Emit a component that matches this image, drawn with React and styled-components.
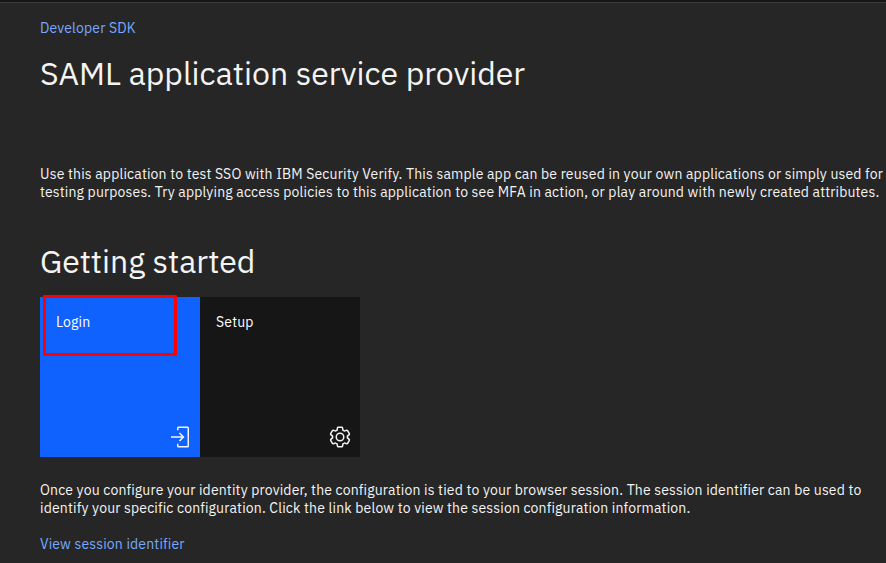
import React from "react";
import styled, { createGlobalStyle } from "styled-components";

const GlobalStyle = createGlobalStyle`
  body {
    margin: 0;
    background: #262626;
    color: #f4f4f4;
    font-family: "IBM Plex Sans", Roboto, "Liberation Sans", sans-serif;
    overflow: hidden;
  }
`;

const Page = styled.div`
  box-sizing: border-box;
  height: 563px;
  background: #262626;
`;

const HeaderEdge = styled.div`
  height: 2px;
  background: #161616;
  border-bottom: 1px solid #393939;
`;

const Content = styled.main`
  display: flex;
  flex-direction: column;
  align-items: flex-start;
  padding: 16px 0 0 40px;
`;

const Link = styled.a`
  color: #78a9ff;
  font-size: 14px;
  line-height: 18px;
  letter-spacing: 0.16px;
  text-decoration: none;
  white-space: nowrap;
`;

const Title = styled.h1`
  margin: ${(p) => p.$top}px 0 0;
  font-size: 32px;
  font-weight: 400;
  line-height: 40px;
  letter-spacing: 0;
  white-space: nowrap;
`;

const Paragraph = styled.p`
  display: flex;
  flex-direction: column;
  margin: ${(p) => p.$top}px 0 ${(p) => p.$bottom || 0}px;
  font-size: 14px;
  line-height: 18px;
`;

const Line = styled.span`
  letter-spacing: 0.16px;
  white-space: nowrap;
`;

const Tiles = styled.div`
  display: flex;
  margin-top: 16px;
`;

const Tile = styled.div`
  position: relative;
  box-sizing: border-box;
  display: flex;
  flex-direction: column;
  justify-content: space-between;
  width: 160px;
  height: 160px;
  padding: 16px 8px 8px 16px;
  background: ${(p) => (p.$primary ? "#0f62fe" : "#161616")};
  color: #ffffff;
  font-size: 14px;
  line-height: 18px;

  svg {
    align-self: flex-end;
    width: 24px;
    height: 24px;
    fill: #f4f4f4;
  }
`;

const Highlight = styled.div`
  position: absolute;
  top: -2px;
  left: 3px;
  box-sizing: border-box;
  width: 134px;
  height: 61px;
  border: 3px solid #ff0000;
  border-radius: 1px;
`;

const LoginIcon = () => (
  <svg viewBox="0 0 32 32" aria-hidden="true">
    <path d="M26,30H14a2,2,0,0,1-2-2V25h2v3H26V4H14V7H12V4a2,2,0,0,1,2-2H26a2,2,0,0,1,2,2V28A2,2,0,0,1,26,30Z" />
    <path d="M14.59 20.59 18.17 17 4 17 4 15 18.17 15 14.59 11.41 16 10 22 16 16 22 14.59 20.59z" />
  </svg>
);

const SettingsIcon = () => (
  <svg viewBox="0 0 32 32" aria-hidden="true">
    <path d="M27,16.76c0-.25,0-.5,0-.76s0-.51,0-.77l1.92-1.68A2,2,0,0,0,29.3,11L26.94,7a2,2,0,0,0-1.73-1,2,2,0,0,0-.64.1l-2.43.82a11.35,11.35,0,0,0-1.31-.75l-.51-2.52a2,2,0,0,0-2-1.61H13.64a2,2,0,0,0-2,1.61l-.51,2.52a11.48,11.48,0,0,0-1.32.75L7.43,6.06A2,2,0,0,0,6.79,6,2,2,0,0,0,5.06,7L2.7,11a2,2,0,0,0,.41,2.51L5,15.24c0,.25,0,.5,0,.76s0,.51,0,.77L3.11,18.45A2,2,0,0,0,2.7,21L5.06,25a2,2,0,0,0,1.73,1,2,2,0,0,0,.64-.1l2.43-.82a11.35,11.35,0,0,0,1.31.75l.51,2.52a2,2,0,0,0,2,1.61h4.72a2,2,0,0,0,2-1.61l.51-2.52a11.48,11.48,0,0,0,1.32-.75l2.42.82a2,2,0,0,0,.64.1,2,2,0,0,0,1.73-1L29.3,21a2,2,0,0,0-.41-2.51ZM25.21,24l-3.43-1.16a8.86,8.86,0,0,1-2.71,1.57L18.36,28H13.64l-.71-3.55a9.36,9.36,0,0,1-2.7-1.57L6.79,24,4.43,20l2.72-2.4a8.9,8.9,0,0,1,0-3.13L4.43,12,6.79,8l3.43,1.16a8.86,8.86,0,0,1,2.71-1.57L13.64,4h4.72l.71,3.55a9.36,9.36,0,0,1,2.7,1.57L25.21,8,27.57,12l-2.72,2.4a8.9,8.9,0,0,1,0,3.13L27.57,20Z" />
    <path d="M16,22a6,6,0,1,1,6-6A5.94,5.94,0,0,1,16,22Zm0-10a3.91,3.91,0,0,0-4,4,3.91,3.91,0,0,0,4,4,3.91,3.91,0,0,0,4-4A3.91,3.91,0,0,0,16,12Z" />
  </svg>
);

export default function App() {
  return (
    <Page>
      <GlobalStyle />
      <HeaderEdge />
      <Content>
        <Link>Developer SDK</Link>
        <Title $top={16}>SAML application service provider</Title>
        <Paragraph $top={72}>
          <Line>
            Use this application to test SSO with IBM Security Verify. This sample app can be reused in your own applications or simply used for
          </Line>
          <Line>
            testing purposes. Try applying access policies to this application to see MFA in action, or play around with newly created attributes.
          </Line>
        </Paragraph>
        <Title $top={40}>Getting started</Title>
        <Tiles>
          <Tile $primary>
            <Line>Login</Line>
            <LoginIcon />
            <Highlight />
          </Tile>
          <Tile>
            <Line>Setup</Line>
            <SettingsIcon />
          </Tile>
        </Tiles>
        <Paragraph $top={24} $bottom={18}>
          <Line>
            Once you configure your identity provider, the configuration is tied to your browser session. The session identifier can be used to
          </Line>
          <Line>
            identify your specific configuration. Click the link below to view the session configuration information.
          </Line>
        </Paragraph>
        <Link>View session identifier</Link>
      </Content>
    </Page>
  );
}
